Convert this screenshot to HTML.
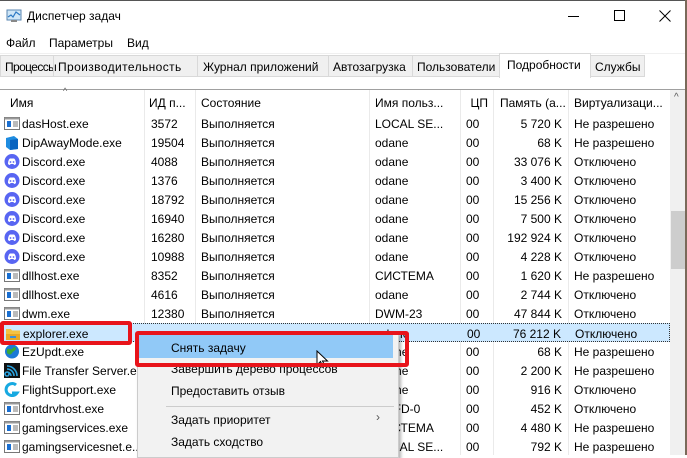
<!DOCTYPE html><html><head><meta charset="utf-8"><style>
*{margin:0;padding:0;box-sizing:border-box}
body{width:687px;height:455px;overflow:hidden;background:#fff;font-family:"Liberation Sans",sans-serif;font-size:12px;color:#000;position:relative}
.a{position:absolute;white-space:nowrap}
.r{position:absolute;left:0;width:670px;height:19px}
.r span{position:absolute;top:3px;white-space:nowrap}
.ic{position:absolute;left:4px;top:2px;width:16px;height:15px}
.vl{position:absolute;top:90px;width:1px;height:365px;background:#eaeaea}
.mi{position:absolute;left:171px;font-size:12px}
</style></head><body>
<div class="a" style="left:0;top:0;width:687px;height:1px;background:#555"></div>
<svg class="a" style="left:6px;top:9px" width="16" height="14"><rect x="1" y="1" width="14" height="10" fill="#cfe6f7" stroke="#5a86b0"/><polyline points="2,8 5,6 7,8 10,3 14,6" fill="none" stroke="#2b78c4" stroke-width="1.2"/><rect x="5" y="11" width="6" height="2" fill="#888"/></svg>
<div class="a" style="left:27px;top:9px">Диспетчер задач</div>
<div class="a" style="left:568px;top:16px;width:11px;height:1px;background:#000"></div>
<div class="a" style="left:614px;top:10px;width:11px;height:11px;border:1px solid #000"></div>
<svg class="a" style="left:659px;top:10px" width="12" height="12"><path d="M0.5 0.5L11.5 11.5M11.5 0.5L0.5 11.5" stroke="#000"/></svg>
<div class="a" style="left:6px;top:36px">Файл</div>
<div class="a" style="left:49px;top:36px">Параметры</div>
<div class="a" style="left:127px;top:36px">Вид</div>
<div class="a" style="left:0;top:53px;width:687px;height:1px;background:#f0f0f0"></div>
<div class="a" style="left:0;top:55px;width:645px;height:22px;background:#f0f0f0;border:1px solid #d9d9d9"></div>
<div class="a" style="left:5px;top:60px;letter-spacing:-0.6px">Процессы</div>
<div class="a" style="left:53px;top:56px;width:1px;height:20px;background:#d9d9d9"></div>
<div class="a" style="left:58px;top:60px;letter-spacing:0.4px">Производительность</div>
<div class="a" style="left:197px;top:56px;width:1px;height:20px;background:#d9d9d9"></div>
<div class="a" style="left:203px;top:60px">Журнал приложений</div>
<div class="a" style="left:328px;top:56px;width:1px;height:20px;background:#d9d9d9"></div>
<div class="a" style="left:333px;top:60px">Автозагрузка</div>
<div class="a" style="left:412px;top:56px;width:1px;height:20px;background:#d9d9d9"></div>
<div class="a" style="left:417px;top:60px">Пользователи</div>
<div class="a" style="left:499px;top:53px;width:92px;height:25px;background:#fff;border:1px solid #d9d9d9;border-bottom:none"></div>
<div class="a" style="left:507px;top:58px">Подробности</div>
<div class="a" style="left:595px;top:60px">Службы</div>
<div class="a" style="left:0;top:89px;width:687px;height:1px;background:#a0a0a0"></div>
<div class="a" style="left:63px;top:86px;font-size:9px;color:#666">^</div>
<div class="a" style="left:10px;top:96px">Имя</div>
<div class="a" style="left:149px;top:96px">ИД п...</div>
<div class="a" style="left:201px;top:96px">Состояние</div>
<div class="a" style="left:375px;top:96px">Имя польз...</div>
<div class="a" style="left:464px;top:96px;width:24px;text-align:right">ЦП</div>
<div class="a" style="left:500px;top:96px">Память (а...</div>
<div class="a" style="left:574px;top:96px">Виртуализаци...</div>
<div class="vl" style="left:144px"></div><div class="vl" style="left:195px"></div><div class="vl" style="left:369px"></div><div class="vl" style="left:460px"></div><div class="vl" style="left:493px"></div><div class="vl" style="left:568px"></div>
<div class="a" style="left:670px;top:90px;width:15px;height:365px;background:#f0f0f0"></div>
<div class="a" style="left:674px;top:92px;font-size:10px;color:#555">^</div>
<div class="a" style="left:671px;top:211px;width:14px;height:58px;background:#cdcdcd"></div>
<div class="a" style="left:685px;top:0;width:2px;height:455px;background:#7a6a5a"></div>
<div id="rows"></div>
<script>
var d=[["dasHost.exe","3572","Выполняется","LOCAL SE...","5 720 K","Не разрешено","w"],
["DipAwayMode.exe","19504","Выполняется","odane","68 K","Не разрешено","b"],
["Discord.exe","4088","Выполняется","odane","33 076 K","Отключено","d"],
["Discord.exe","1376","Выполняется","odane","3 400 K","Отключено","d"],
["Discord.exe","18792","Выполняется","odane","15 256 K","Отключено","d"],
["Discord.exe","16940","Выполняется","odane","7 500 K","Отключено","d"],
["Discord.exe","16280","Выполняется","odane","192 924 K","Отключено","d"],
["Discord.exe","10988","Выполняется","odane","4 228 K","Отключено","d"],
["dllhost.exe","8352","Выполняется","СИСТЕМА","1 620 K","Не разрешено","w"],
["dllhost.exe","4616","Выполняется","odane","2 744 K","Отключено","w"],
["dwm.exe","12380","Выполняется","DWM-23","47 844 K","Отключено","w"],
["explorer.exe","","","odane","76 212 K","Отключено","f"],
["EzUpdt.exe","","","odane","68 K","Не разрешено","g"],
["File Transfer Server.exe","","","odane","2 200 K","Не разрешено","t"],
["FlightSupport.exe","","","odane","916 K","Отключено","l"],
["fontdrvhost.exe","","","UMFD-0","452 K","Отключено","w"],
["gamingservices.exe","","","СИСТЕМА","4 480 K","Не разрешено","w"],
["gamingservicesnet.e...","","","LOCAL SE...","792 K","Не разрешено","w"]];
var I={w:'<rect x="0.5" y="1.5" width="15" height="12" fill="#fff" stroke="#777"/><rect x="0.5" y="1.5" width="15" height="2" fill="#999"/><rect x="3" y="5" width="4" height="6" fill="#1a6fd1"/><path d="M9 6h5M9 8h5M9 10h5" stroke="#777"/>',
b:'<path d="M2 3l8-2 4 3v10l-8 1-4-3z" fill="#1e8ce0"/><path d="M6 5l8-1v10l-8 1z" fill="#0a64c0"/>',
d:'<circle cx="8" cy="7.5" r="7.5" fill="#5865f2"/><path d="M4 10c0-3 1-5 2-5.5h4c1 .5 2 2.5 2 5.5-1 1-2 1-2 1l-.5-1h-3L6 11s-1 0-2-1z" fill="#fff"/><circle cx="6.5" cy="8" r=".9" fill="#5865f2"/><circle cx="9.5" cy="8" r=".9" fill="#5865f2"/>',
f:'<path d="M1 3h5l1 1.5h8V14H1z" fill="#f5c342"/><rect x="1" y="8" width="14" height="6" fill="#e9a825"/><rect x="5" y="10" width="6" height="2" fill="#3b8fd9"/>',
g:'<circle cx="8" cy="7.5" r="7" fill="#1c7ad6"/><path d="M3 5c2-1 4 1 5 0s2-3 4-1c0 3-3 3-4 5s-3 2-5 0z" fill="#39a83a"/>',
t:'<rect width="16" height="15" fill="#111"/><path d="M3 13a2 2 0 1 1 0.1 0M3 9a4 4 0 0 1 4 4M3 6a7 7 0 0 1 7 7M3 3a10 10 0 0 1 10 10" stroke="#2aa3e0" stroke-width="1.6" fill="none"/>',
l:'<path d="M12 3A6 6 0 1 0 13 11h-5" stroke="#17a9e1" stroke-width="3" fill="none"/>'};
var h='';
d.forEach(function(r,i){var t=114+i*19;
h+='<div class="r" style="top:'+t+'px'+(i==11?';background:#cce8ff;border:1px dotted #333':'')+'">'+
'<svg class="ic" width="16" height="15">'+I[r[6]]+'</svg><span style="left:22px">'+r[0]+'</span><span style="left:151px">'+r[1]+'</span><span style="left:201px">'+r[2]+'</span><span style="left:375px">'+r[3]+'</span><span style="left:466px">00</span><span style="right:108px">'+r[4]+'</span><span style="left:574px">'+r[5]+'</span></div>';});
document.getElementById('rows').innerHTML=h;
</script>
<div class="a" style="left:137px;top:333px;width:262px;height:125px;background:#f2f2f2;border:1px solid #ccc;box-shadow:2px 2px 3px rgba(0,0,0,.3)"></div>
<div class="a" style="left:139px;top:335px;width:254px;height:23px;background:#91c9f7"></div>
<div class="mi" style="top:341px">Снять задачу</div>
<div class="mi" style="top:362px">Завершить дерево процессов</div>
<div class="mi" style="top:384px">Предоставить отзыв</div>
<div class="a" style="left:166px;top:406px;width:228px;height:1px;background:#ccc"></div>
<div class="mi" style="top:413px">Задать приоритет</div>
<div class="a" style="left:376px;top:410px;color:#555">›</div>
<div class="mi" style="top:435px">Задать сходство</div>
<svg class="a" style="left:316px;top:350px" width="14" height="20"><path d="M1 1v14l3.5-3.5 2.5 5.5 2-1-2.5-5h5z" fill="#fff" stroke="#000"/></svg>
<div class="a" style="left:0;top:321px;width:132px;height:24px;border:4px solid #e8141b;border-radius:3px"></div>
<div class="a" style="left:135px;top:331px;width:274px;height:36px;border:4px solid #e8141b;border-radius:3px"></div>
</body></html>
